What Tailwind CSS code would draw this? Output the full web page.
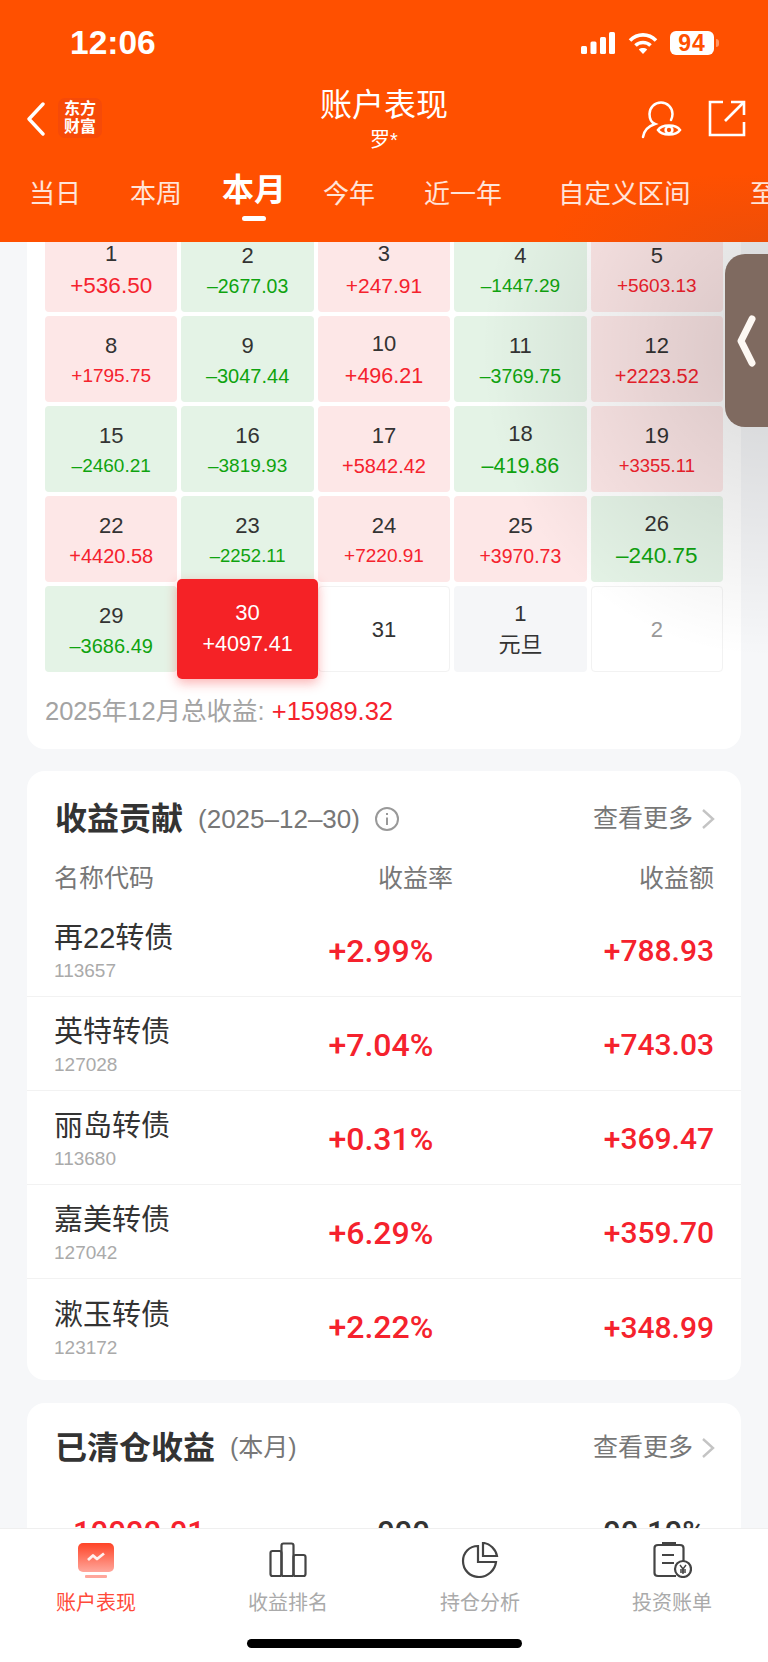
<!DOCTYPE html>
<html lang="zh-CN">
<head>
<meta charset="UTF-8">
<meta name="viewport" content="width=device-width, initial-scale=1.0">
<title>账户表现</title>
<script src="https://cdn.jsdelivr.net/npm/@tailwindcss/browser@4"></script>
</head>
<body class="bg-[#f6f7f9] font-['Liberation_Sans','Noto_Sans_CJK_SC',sans-serif]">
<div class="relative w-[768px] h-[1662px] overflow-hidden">

  <!-- Header -->
  <header class="relative z-30 h-[242px] bg-[radial-gradient(ellipse_220px_70px_at_100%_100%,#ee4e08,#ff5000)] text-white">
    <div class="flex justify-between items-center h-[86px] pl-[70px] pr-[49px]">
      <span class="text-[33.500px] font-bold">12:06</span>
      <div class="flex items-center gap-[13px]">
        <svg width="34" height="22" viewBox="0 0 34 22" fill="#fff"><rect x="0" y="14" width="6" height="8" rx="1.5"/><rect x="9.5" y="9.5" width="6" height="12.5" rx="1.5"/><rect x="19" y="5" width="6" height="17" rx="1.5"/><rect x="28" y="0" width="6" height="22" rx="1.5"/></svg>
        <svg width="30" height="22" viewBox="0 0 30 22" fill="none" stroke="#fff" stroke-width="3.6"><path d="M2 8.5 C9.5 1 20.5 1 28 8.5"/><path d="M7.5 13.5 C11.5 9.5 18.5 9.5 22.5 13.5"/><path d="M15 22 L10.8 17.4 C13 15.5 17 15.5 19.2 17.4 Z" fill="#fff" stroke="none"/></svg>
        <div class="flex items-center gap-[2px] -ml-[1px]">
          <div class="w-[44px] h-[24px] bg-white rounded-[6px] text-[#ff5000] text-[23px] font-bold tracking-[1px] leading-[24px] text-center">94</div>
          <div class="w-[3px] h-[8px] bg-white/40 rounded-r-full"></div>
        </div>
      </div>
    </div>
    <div class="relative h-[70px]">
      <svg class="absolute left-[26px] top-[16px]" width="20" height="34" viewBox="0 0 20 34" fill="none" stroke="#fff" stroke-width="3.4" stroke-linecap="round" stroke-linejoin="round"><path d="M17 2 L3 17 L17 32"/></svg>
      <div class="absolute left-[58px] top-[12px] w-[44px] h-[40px] bg-[#f64a08] rounded-[7px] flex flex-col items-center justify-center text-[16px] leading-[18px] font-bold font-['Liberation_Serif','Noto_Sans_CJK_SC',serif]">
        <span>东方</span>
        <span>财富</span>
      </div>
      <div class="text-center">
        <div class="text-[32px] leading-[38px]">账户表现</div>
        <div class="text-[20px] leading-[26px] mt-[3px]">罗*</div>
      </div>
      <svg class="absolute left-[640px] top-[13px]" width="42" height="41" viewBox="0 0 42 41" fill="none" stroke="#fff" stroke-width="2.5" stroke-linecap="round"><path d="M3 38 C4 31 9 27 15 25 C10 23 9.500 19 9.500 15 A11.500 11.500 0 0 1 32.500 15 C32.500 17 32 19 31 21"/><path d="M18 31 C22 25 36 25 40 31 C36 37 22 37 18 31 Z"/><circle cx="29" cy="31" r="3.400"/></svg>
      <svg class="absolute left-[708px] top-[13px]" width="38" height="39" viewBox="0 0 38 39" fill="none" stroke="#fff" stroke-width="2.600"><path d="M15 3 H2 V36 H36 V23"/><path d="M17 22 L35 4"/><path d="M23 3 H36 V16"/></svg>
    </div>
    <nav class="relative h-[86px] text-[26px] text-white/85">
      <span class="absolute left-[29px] top-[24px] leading-[28px]">当日</span>
      <span class="absolute left-[130px] top-[24px] leading-[28px]">本周</span>
      <span class="absolute left-[222px] top-[17px] leading-[34px] text-[32px] font-bold text-white">本月</span>
      <span class="absolute left-[242px] top-[60px] w-[24px] h-[5px] rounded-full bg-white"></span>
      <span class="absolute left-[323px] top-[24px] leading-[28px]">今年</span>
      <span class="absolute left-[424px] top-[24px] leading-[28px]">近一年</span>
      <span class="absolute left-[558px] top-[24px] leading-[28px] text-[26.500px] whitespace-nowrap">自定义区间</span>
      <span class="absolute left-[750px] top-[24px] leading-[28px]">至</span>
    </nav>
  </header>

  <main class="absolute z-10 top-[226px] left-[27px] w-[714px]">

    <!-- Calendar card -->
    <section class="bg-white rounded-b-[18px] h-[523px] px-[18px]">
      <div class="grid grid-cols-5 gap-x-[4px] gap-y-[4px] auto-rows-[86px] w-[678px] text-center text-[22px] text-[#333]">
        <div class="rounded-[4px] bg-[#fde7e7] pt-[15px]"><div class="leading-[26px]">1</div><div class="text-[22.500px] leading-[26px] mt-[6px] text-[#f5222d]">+536.50</div></div>
        <div class="rounded-[4px] bg-[#e4f3e6] pt-[17px]"><div class="leading-[26px]">2</div><div class="text-[19.500px] leading-[26px] mt-[4px] text-[#0fa30f]">–2677.03</div></div>
        <div class="rounded-[4px] bg-[#fde7e7] pt-[15px]"><div class="leading-[26px]">3</div><div class="text-[21px] leading-[26px] mt-[6px] text-[#f5222d]">+247.91</div></div>
        <div class="rounded-[4px] bg-[#e4f3e6] pt-[17px]"><div class="leading-[26px]">4</div><div class="text-[19px] leading-[26px] mt-[4px] text-[#0fa30f]">–1447.29</div></div>
        <div class="rounded-[4px] bg-[#fde7e7] pt-[17px]"><div class="leading-[26px]">5</div><div class="text-[19px] leading-[26px] mt-[4px] text-[#f5222d]">+5603.13</div></div>

        <div class="rounded-[4px] bg-[#fde7e7] pt-[17px]"><div class="leading-[26px]">8</div><div class="text-[19px] leading-[26px] mt-[4px] text-[#f5222d]">+1795.75</div></div>
        <div class="rounded-[4px] bg-[#e4f3e6] pt-[17px]"><div class="leading-[26px]">9</div><div class="text-[20px] leading-[26px] mt-[4px] text-[#0fa30f]">–3047.44</div></div>
        <div class="rounded-[4px] bg-[#fde7e7] pt-[15px]"><div class="leading-[26px]">10</div><div class="text-[21.500px] leading-[26px] mt-[6px] text-[#f5222d]">+496.21</div></div>
        <div class="rounded-[4px] bg-[#e4f3e6] pt-[17px]"><div class="leading-[26px]">11</div><div class="text-[19.500px] leading-[26px] mt-[4px] text-[#0fa30f]">–3769.75</div></div>
        <div class="rounded-[4px] bg-[#fde7e7] pt-[17px]"><div class="leading-[26px]">12</div><div class="text-[20px] leading-[26px] mt-[4px] text-[#f5222d]">+2223.52</div></div>

        <div class="rounded-[4px] bg-[#e4f3e6] pt-[17px]"><div class="leading-[26px]">15</div><div class="text-[19px] leading-[26px] mt-[4px] text-[#0fa30f]">–2460.21</div></div>
        <div class="rounded-[4px] bg-[#e4f3e6] pt-[17px]"><div class="leading-[26px]">16</div><div class="text-[19px] leading-[26px] mt-[4px] text-[#0fa30f]">–3819.93</div></div>
        <div class="rounded-[4px] bg-[#fde7e7] pt-[17px]"><div class="leading-[26px]">17</div><div class="text-[20px] leading-[26px] mt-[4px] text-[#f5222d]">+5842.42</div></div>
        <div class="rounded-[4px] bg-[#e4f3e6] pt-[15px]"><div class="leading-[26px]">18</div><div class="text-[21.500px] leading-[26px] mt-[6px] text-[#0fa30f]">–419.86</div></div>
        <div class="rounded-[4px] bg-[#fde7e7] pt-[17px]"><div class="leading-[26px]">19</div><div class="text-[18.500px] leading-[26px] mt-[4px] text-[#f5222d]">+3355.11</div></div>

        <div class="rounded-[4px] bg-[#fde7e7] pt-[17px]"><div class="leading-[26px]">22</div><div class="text-[20px] leading-[26px] mt-[4px] text-[#f5222d]">+4420.58</div></div>
        <div class="rounded-[4px] bg-[#e4f3e6] pt-[17px]"><div class="leading-[26px]">23</div><div class="text-[18.500px] leading-[26px] mt-[4px] text-[#0fa30f]">–2252.11</div></div>
        <div class="rounded-[4px] bg-[#fde7e7] pt-[17px]"><div class="leading-[26px]">24</div><div class="text-[19px] leading-[26px] mt-[4px] text-[#f5222d]">+7220.91</div></div>
        <div class="rounded-[4px] bg-[#fde7e7] pt-[17px]"><div class="leading-[26px]">25</div><div class="text-[19.500px] leading-[26px] mt-[4px] text-[#f5222d]">+3970.73</div></div>
        <div class="rounded-[4px] bg-[#e4f3e6] pt-[15px]"><div class="leading-[26px]">26</div><div class="text-[22.500px] leading-[26px] mt-[6px] text-[#0fa30f]">–240.75</div></div>

        <div class="rounded-[4px] bg-[#e4f3e6] pt-[17px]"><div class="leading-[26px]">29</div><div class="text-[20px] leading-[26px] mt-[4px] text-[#0fa30f]">–3686.49</div></div>
        <div class="relative z-10 -mx-[4px] -my-[7px] rounded-[5px] bg-[#f52226] text-white pt-[21px] shadow-[0_4px_12px_rgba(245,34,38,0.35)]"><div class="leading-[26px]">30</div><div class="text-[21.500px] leading-[26px] mt-[5px]">+4097.41</div></div>
        <div class="rounded-[4px] border border-[#f2f2f2] flex items-center justify-center">31</div>
        <div class="rounded-[4px] bg-[#f5f6f8] pt-[15px]"><div class="leading-[26px]">1</div><div class="text-[22px] leading-[26px] mt-[5px]">元旦</div></div>
        <div class="rounded-[4px] border border-[#f2f2f2] flex items-center justify-center text-[#999]">2</div>
      </div>
      <div class="mt-[23px] text-[25.500px] leading-[32px] text-[#a3a3a3]">2025年12月总收益: <span class="text-[#f5222d]">+15989.32</span></div>
    </section>

    <!-- Contribution card -->
    <section class="mt-[22px] bg-white rounded-[18px] h-[609px]">
      <div class="flex items-center h-[95px] pl-[28px] pr-[26px] pt-[1px]">
        <h2 class="text-[32px] font-bold text-[#333]">收益贡献</h2>
        <span class="ml-[15px] text-[26px] text-[#777] whitespace-nowrap">(2025–12–30)</span>
        <svg class="ml-[14px]" width="26" height="26" viewBox="0 0 26 26" fill="none" stroke="#999" stroke-width="2"><circle cx="13" cy="13" r="11"/><path d="M13 11.500 V19" /><path d="M13 7 V9"/></svg>
        <span class="ml-auto text-[25px] text-[#777]">查看更多</span>
        <svg class="ml-[8px]" width="14" height="22" viewBox="0 0 14 22" fill="none" stroke="#c4c4c4" stroke-width="2.400"><path d="M2 2 L12 11 L2 20"/></svg>
      </div>
      <div class="grid grid-cols-[300px_99px_1fr] items-start h-[37px] pl-[27px] pr-[27px] text-[25px] leading-[25px] text-[#777]">
        <span>名称代码</span><span class="text-right">收益率</span><span class="text-right">收益额</span>
      </div>
      <div class="flex items-center justify-between h-[94px] pl-[27px] pr-[27px] border-b border-[#f2f2f2]">
        <div class="w-[250px] pt-[4px]"><div class="text-[29px] leading-[36px] text-[#333]">再22转债</div><div class="text-[19px] leading-[24px] mt-[3px] text-[#aaa]">113657</div></div>
        <div class="w-[160px] mr-[68px] mt-[2px] text-right font-['Roboto'] font-medium text-[32px] text-[#f5222d]">+2.99%</div>
        <div class="w-[230px] mt-[2px] text-right font-['Roboto'] font-medium text-[30px] text-[#f5222d]">+788.93</div>
      </div>
      <div class="flex items-center justify-between h-[94px] pl-[27px] pr-[27px] border-b border-[#f2f2f2]">
        <div class="w-[250px] pt-[4px]"><div class="text-[29px] leading-[36px] text-[#333]">英特转债</div><div class="text-[19px] leading-[24px] mt-[3px] text-[#aaa]">127028</div></div>
        <div class="w-[160px] mr-[68px] mt-[2px] text-right font-['Roboto'] font-medium text-[32px] text-[#f5222d]">+7.04%</div>
        <div class="w-[230px] mt-[2px] text-right font-['Roboto'] font-medium text-[30px] text-[#f5222d]">+743.03</div>
      </div>
      <div class="flex items-center justify-between h-[94px] pl-[27px] pr-[27px] border-b border-[#f2f2f2]">
        <div class="w-[250px] pt-[4px]"><div class="text-[29px] leading-[36px] text-[#333]">丽岛转债</div><div class="text-[19px] leading-[24px] mt-[3px] text-[#aaa]">113680</div></div>
        <div class="w-[160px] mr-[68px] mt-[2px] text-right font-['Roboto'] font-medium text-[32px] text-[#f5222d]">+0.31%</div>
        <div class="w-[230px] mt-[2px] text-right font-['Roboto'] font-medium text-[30px] text-[#f5222d]">+369.47</div>
      </div>
      <div class="flex items-center justify-between h-[94px] pl-[27px] pr-[27px] border-b border-[#f2f2f2]">
        <div class="w-[250px] pt-[4px]"><div class="text-[29px] leading-[36px] text-[#333]">嘉美转债</div><div class="text-[19px] leading-[24px] mt-[3px] text-[#aaa]">127042</div></div>
        <div class="w-[160px] mr-[68px] mt-[2px] text-right font-['Roboto'] font-medium text-[32px] text-[#f5222d]">+6.29%</div>
        <div class="w-[230px] mt-[2px] text-right font-['Roboto'] font-medium text-[30px] text-[#f5222d]">+359.70</div>
      </div>
      <div class="flex items-center justify-between h-[94px] pl-[27px] pr-[27px]">
        <div class="w-[250px] pt-[4px]"><div class="text-[29px] leading-[36px] text-[#333]">漱玉转债</div><div class="text-[19px] leading-[24px] mt-[3px] text-[#aaa]">123172</div></div>
        <div class="w-[160px] mr-[68px] mt-[2px] text-right font-['Roboto'] font-medium text-[32px] text-[#f5222d]">+2.22%</div>
        <div class="w-[230px] mt-[2px] text-right font-['Roboto'] font-medium text-[30px] text-[#f5222d]">+348.99</div>
      </div>
    </section>

    <!-- Closed positions card -->
    <section class="mt-[23px] bg-white rounded-t-[18px] h-[300px]">
      <div class="flex items-center h-[88px] pl-[28px] pr-[26px] pt-[1px]">
        <h2 class="text-[32px] font-bold text-[#333]">已清仓收益</h2>
        <span class="ml-[15px] text-[25px] text-[#777]">(本月)</span>
        <span class="ml-auto text-[25px] text-[#777]">查看更多</span>
        <svg class="ml-[8px]" width="14" height="22" viewBox="0 0 14 22" fill="none" stroke="#c4c4c4" stroke-width="2.400"><path d="M2 2 L12 11 L2 20"/></svg>
      </div>
      <div class="relative mt-[22px] h-[40px] font-['Roboto'] font-medium text-[31px] leading-[40px] text-[#333]">
        <span class="absolute left-[46px] text-[#f5222d]">10000.01</span>
        <span class="absolute left-[350px]">000</span>
        <span class="absolute right-[36px]">00.10%</span>
      </div>
    </section>
  </main>

  <!-- Side handle and its shadow -->
  <div class="absolute z-20 left-[478px] top-[40px] w-[290px] h-[620px] pointer-events-none bg-[radial-gradient(ellipse_at_100%_50%,rgba(0,0,0,0.15),rgba(0,0,0,0)_70%)]"></div>
  <div class="absolute z-20 left-[725px] top-[254px] w-[43px] h-[173px] bg-[#7f6a60] rounded-l-[20px] flex items-center">
    <svg class="ml-[11px]" width="22" height="52" viewBox="0 0 22 52" fill="none" stroke="#fdf8f3" stroke-width="7" stroke-linecap="round" stroke-linejoin="round"><path d="M16 4 L5 26 L16 48"/></svg>
  </div>

  <!-- Bottom tabs -->
  <nav class="absolute z-40 left-0 bottom-0 w-full h-[134px] bg-white border-t border-[#efefef] grid grid-cols-4 text-center text-[20px] text-[#aaa]">
    <div class="flex flex-col items-center pt-[13px]">
      <svg width="38" height="36" viewBox="0 0 38 36"><defs><linearGradient id="tg" x1="0" y1="0" x2="0" y2="1"><stop offset="0" stop-color="#ff4326"/><stop offset="1" stop-color="#ffa79c"/></linearGradient></defs><rect x="1" y="1" width="36" height="29" rx="5" fill="url(#tg)"/><rect x="8" y="33" width="22" height="3" rx="1" fill="#ffa79c"/><path d="M11 18 L16 13.500 L20 17 L27 11.500" fill="none" stroke="#fff" stroke-width="2.800" stroke-linejoin="round" opacity=".9"/></svg>
      <span class="mt-[12px] leading-[26px] text-[#ff4a3a]">账户表现</span>
    </div>
    <div class="flex flex-col items-center pt-[13px]">
      <svg width="38" height="36" viewBox="0 0 38 36" fill="none" stroke="#444" stroke-width="2.200"><rect x="1.500" y="9" width="11" height="25" rx="2"/><rect x="12.500" y="1.500" width="12" height="32.500" rx="2"/><rect x="24.500" y="13" width="12" height="21" rx="2"/></svg>
      <span class="mt-[12px] leading-[26px]">收益排名</span>
    </div>
    <div class="flex flex-col items-center pt-[13px]">
      <svg width="38" height="36" viewBox="0 0 38 36" fill="none" stroke="#444" stroke-width="2.200"><path d="M17 4 C8 4 2 11 2 19 C2 28 9 35 18 35 C27 35 34 28 35 20 L17 20 Z"/><path d="M22 1 C29 1 35 8 36 14 L22 14 Z"/></svg>
      <span class="mt-[12px] leading-[26px]">持仓分析</span>
    </div>
    <div class="flex flex-col items-center pt-[13px]">
      <svg width="40" height="36" viewBox="0 0 40 36" fill="none" stroke="#444" stroke-width="2.200"><path d="M24 34 H6 C4 34 2.500 33 2.500 31 V6 C2.500 4 4 3 6 3 H28 C30 3 31.500 4 31.500 6 V20"/><path d="M10 1 H24"/><path d="M10 13 H22 M10 21 H22"/><circle cx="31" cy="27" r="8" fill="#fff"/><path d="M28 23 L31 27 L34 23 M31 27 V32 M28 28 H34 M28 30 H34" stroke-width="1.400"/></svg>
      <span class="mt-[12px] leading-[26px]">投资账单</span>
    </div>
    <div class="absolute left-[247px] top-[110px] w-[275px] h-[9px] rounded-full bg-black"></div>
  </nav>
</div>
</body>
</html>
